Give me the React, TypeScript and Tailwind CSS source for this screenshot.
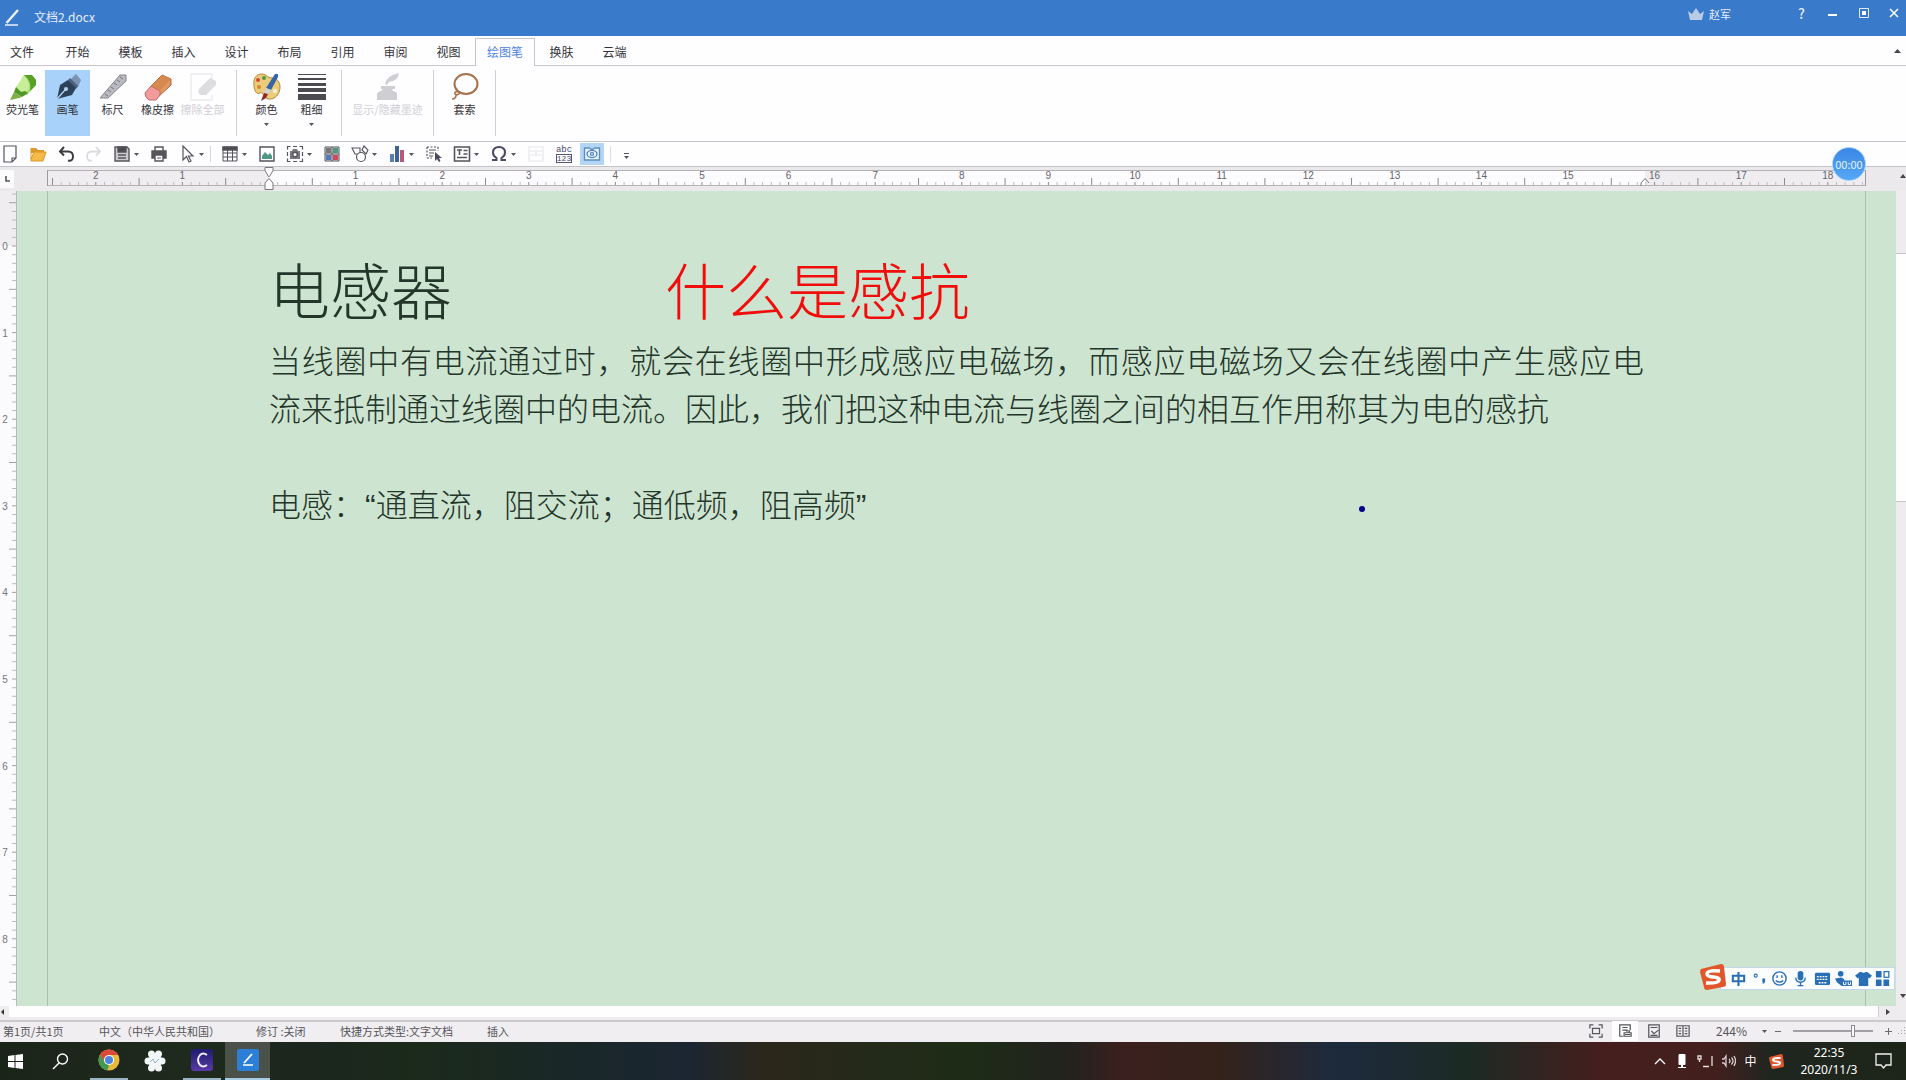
import React, { useState } from "react";

const UNIT = 86.6;
const INK = "#55555b";

/* ---------- ribbon icons ---------- */

const Highlighter = () => (
  <svg width="28" height="28" viewBox="0 0 28 28">
    <path d="M7 15 15 2h8l4 5v5l-9 10-7-2z" fill="#a9e070" />
    <path d="M15 2h8l4 5v5l-6 6q2-10-6-16z" fill="#57a02a" />
    <path d="M15 3q6 5 5 13l-5 5-6-4-2-3z" fill="#c6ee97" />
    <path d="M7 14l-2 5 8 5 6-4-3-2-4 1-4-4z" fill="#4f9628" />
    <path d="M5 19l8 5-3 1-9 2z" fill="#7fae45" />
  </svg>
);
const PenNib = () => (
  <svg width="28" height="28" viewBox="0 0 28 28">
    <path d="M15 8 22 1l5 6-3 7-5 2z" fill="#7c92b0" />
    <path d="M14 7l2-2 8 8-2 3z" fill="#4d6180" />
    <path d="M3 26 6 12l8-5 8 8-4 7z" fill="#2d4159" />
    <path d="M3 26l8-9" stroke="#b7d4f2" strokeWidth="1.3" />
    <circle cx="12" cy="16" r="2" fill="#b7d4f2" />
  </svg>
);
const RulerIcon = () => (
  <svg width="28" height="28" viewBox="0 0 28 28">
    <path d="M1 25 21 2h6v6L9 25z" fill="#b9bac2" stroke="#85868d" strokeWidth="1" />
    <path d="M6 21l3 2M9 17l3 2M12 14l3 2M15 10l3 2M18 7l3 2M21 4l3 2" stroke="#74757d" strokeWidth="1" />
  </svg>
);
const EraserIcon = () => (
  <svg width="28" height="28" viewBox="0 0 28 28">
    <path d="M7 13 18 2l9 4v6L13 25z" fill="#e39a62" stroke="#a9643b" strokeWidth="1" />
    <path d="M18 2l9 4-11 12-9-5z" fill="#d68a50" />
    <path d="M1 20l6-7 9 5v4l-4 5H5q-4-2-4-7z" fill="#f39a9a" stroke="#c46a6a" strokeWidth="1" />
  </svg>
);
const EraseAllIcon = () => (
  <svg width="28" height="28" viewBox="0 0 28 28" fill="none">
    <path d="M23 6V1H2v26h21v-5" stroke="#ebebee" strokeWidth="1.4" />
    <path d="M10 16 21 5l6 3v4L17 22h-5q-4-2-2-6z" fill="#dddde0" />
  </svg>
);
const PaletteIcon = () => (
  <svg width="28" height="28" viewBox="0 0 28 28">
    <path d="M9 1C3 1 0 6 1 12c0 6 3 10 6 8s3 4 8 6c7 1 12-5 12-12 0-5-3-9-8-9S14 1 9 1z" fill="#eccb7a" stroke="#b48a3c" strokeWidth="1" />
    <circle cx="5" cy="7" r="2" fill="#d44a3a" />
    <circle cx="11" cy="5" r="2" fill="#4f9a4a" />
    <circle cx="6" cy="14" r="2" fill="#d8862c" />
    <circle cx="22" cy="18" r="2.2" fill="#eef0d0" />
    <path d="M22 1h3v3l-7 13-5-2z" fill="#3564a8" />
    <path d="M13 15l5 2-3 4-4-1z" fill="#cfd3da" />
    <path d="M11 20l4 1-2 4-5 3z" fill="#8f2a22" />
  </svg>
);
const ThicknessIcon = () => (
  <svg width="28" height="28" viewBox="0 0 28 28" fill="#4a4a50">
    <path d="M0 1h28v1H0zM0 5h28v2H0zM0 10h28v3H0zM0 15h28v4H0zM0 21h28v6H0z" />
  </svg>
);
const InkIcon = () => (
  <svg width="28" height="28" viewBox="0 0 28 28" fill="#cfcfd3">
    <path d="M11 11q1-8 14-11-1 8-10 9l-2 3z" />
    <path d="M7 13h14v3h-3l1 2q4 1 4 3v6H3v-6q0-2 4-3l2-2H7z" />
  </svg>
);
const LassoIcon = () => (
  <svg width="28" height="28" viewBox="0 0 28 28" fill="none" stroke="#a9714a" strokeWidth="2">
    <ellipse cx="15" cy="11" rx="11.5" ry="10" />
    <path d="M8 19q-5-1-4 2 2 2 5-1M5 22q0 4-4 4" strokeWidth="1.6" />
  </svg>
);

/* ---------- quick toolbar icons ---------- */

const Q = ({ children }: { children: React.ReactNode }) => (
  <svg width="18" height="18" viewBox="0 0 18 18" fill="none" stroke={INK} strokeWidth="1.4">
    {children}
  </svg>
);
const quick: { label: string; icon: React.ReactNode; menu?: boolean; sep?: boolean; active?: boolean }[] = [
  { label: "新建", icon: <Q><path d="M3 1h12v12l-4 4H3zM15 13h-4v4" strokeWidth="1.200" /></Q> },
  {
    label: "打开",
    icon: (
      <Q>
        <path d="M2 3h5l2 2h6v3H2z" fill="#d99a2b" stroke="none" />
        <path d="M2 3v13h12l3-9H5l-3 7" fill="#f5bb4a" stroke="#d99a2b" strokeWidth="1" />
      </Q>
    ),
  },
  { label: "撤销", icon: <Q><path d="M7 2 3 6.500l4 4M3 6.500h8q5 0 5 5t-5 4" stroke="#3d3d42" strokeWidth="2" /></Q> },
  { label: "恢复", icon: <Q><path d="M11 2l4 4.500-4 4M15 6.500H7q-5 0-5 5t5 4" stroke="#dcdce0" strokeWidth="1.800" /></Q> },
  {
    label: "保存",
    menu: true,
    icon: (
      <Q>
        <path d="M2 2h12l2 2v12H2z" fill="#c9c9ce" />
        <path d="M5 2h8v5H5z" fill="#4a4a50" />
        <path d="M5 10h8M5 13h8" />
      </Q>
    ),
  },
  {
    label: "打印",
    icon: (
      <Q>
        <path d="M5 6V2h8v4" fill="#fff" />
        <path d="M2 6h14v7H2z" fill="#55555b" />
        <path d="M5 10h8v6H5z" fill="#fff" />
        <path d="M7 13h4" strokeWidth="1" />
      </Q>
    ),
  },
  { label: "选择", menu: true, sep: true, icon: <Q><path d="M5 1v14l3.500-3.500L11 17l2-1-2.500-5H15z" strokeWidth="1.200" /></Q> },
  {
    label: "表格",
    menu: true,
    icon: (
      <Q>
        <path d="M2 2h14v14H2zM2 8h14M2 12h14M6.500 5v11M11.500 5v11" strokeWidth="1" />
        <path d="M2 2h14v3H2z" fill="#4a4a50" />
      </Q>
    ),
  },
  {
    label: "图片",
    icon: (
      <Q>
        <path d="M2 2h14v14H2z" />
        <path d="M4 14v-3l3-4 3 3 2-2 2 3v3z" fill="#4d9a80" stroke="none" />
      </Q>
    ),
  },
  {
    label: "截图",
    menu: true,
    icon: (
      <Q>
        <path d="M1.500 4.500v-3h3M13.500 1.500h3v3M16.500 13.500v3h-3M4.500 16.500h-3v-3M7 1.500h4M7 16.500h4M1.500 7v4M16.500 7v4" strokeWidth="1.200" />
        <path d="M4 6h2l1-2h4l1 2h2v8H4z" fill="#77777d" stroke="none" />
        <circle cx="9" cy="9.500" r="2.300" fill="#fff" />
      </Q>
    ),
  },
  {
    label: "剪贴画",
    icon: (
      <Q>
        <path d="M2 2h14v14H2z" fill="#e4e4e8" strokeWidth="1" />
        <path d="M3 3h5v5H3z" fill="#777" stroke="none" />
        <path d="M10 3h5v5h-5z" fill="#4d9a80" stroke="none" />
        <path d="M3 10h5v5H3z" fill="#5578b8" stroke="none" />
        <path d="M10 10h5v5h-5z" fill="#cf4a5a" stroke="none" />
        <path d="M9 2v14M2 9h14" strokeWidth="1" />
      </Q>
    ),
  },
  {
    label: "形状",
    menu: true,
    icon: (
      <Q>
        <path d="M1 3h8v6H4z" strokeWidth="1.100" />
        <path d="M13 1l4 4-2 4-4-4z" strokeWidth="1.100" />
        <circle cx="10" cy="12" r="4.500" fill="#fff" strokeWidth="1.200" />
      </Q>
    ),
  },
  {
    label: "图表",
    menu: true,
    icon: (
      <Q>
        <path d="M2 9h4v8H2z" fill="#5f7fae" stroke="none" />
        <path d="M7 1h4v16H7z" fill="#3d6593" stroke="none" />
        <path d="M12 5h4v12h-4z" fill="#b55a78" stroke="none" />
      </Q>
    ),
  },
  {
    label: "选择对象",
    icon: (
      <Q>
        <path d="M2 2h11M2 2v11M13 2v4M2 13h5" strokeDasharray="2 1.500" strokeWidth="1.200" />
        <path d="M4 5h7M4 8h5M4 11h4" strokeWidth="1" />
        <path d="M10 7v9l2-2 2 3 1.500-1-1.500-3h3z" fill="#4b4b5c" stroke="none" />
      </Q>
    ),
  },
  {
    label: "文本框",
    menu: true,
    icon: (
      <Q>
        <path d="M1.500 2h15v14h-15z" strokeWidth="1.600" />
        <path d="M4 5h5M6.500 5v5M10.500 5.500h4M10.500 9h4M4 12.500h10" strokeWidth="1.600" />
      </Q>
    ),
  },
  {
    label: "符号",
    menu: true,
    icon: (
      <Q>
        <path d="M2 15h4.500v-2Q3 11 3 7.500 3 2 9 2t6 5.500q0 3.500-3.500 5.500v2H16" stroke="#4a4a62" strokeWidth="2" />
      </Q>
    ),
  },
  { label: "页眉", icon: <Q><path d="M2 2h14v14H2zM2 6h14M9 6v4M4 10h10" stroke="#e6e6ea" strokeWidth="1.200" /></Q> },
  { label: "字数统计", icon: null },
  {
    label: "阅读模式",
    active: true,
    icon: (
      <Q>
        <path d="M1.500 3h5l2.500 2 2.500-2h5v12h-15z" stroke="#5b8cc4" fill="#e9f3fd" />
        <ellipse cx="9" cy="9" rx="5" ry="3.500" stroke="#3d78bb" strokeWidth="1.200" />
        <circle cx="9" cy="9" r="1.500" stroke="#3d78bb" strokeWidth="1.200" />
      </Q>
    ),
  },
];

const Down = ({ color = "#55555b" }: { color?: string }) => (
  <svg width="5" height="3" viewBox="0 0 5 3">
    <path d="M0 0h5L2.500 3z" fill={color} />
  </svg>
);

const Divider = () => <div className="h-[66px] w-px bg-[#d2d0d4]" />;

function RibbonButton(props: {
  label: string;
  icon: React.ReactNode;
  active?: boolean;
  disabled?: boolean;
  menu?: boolean;
  wide?: boolean;
}) {
  return (
    <button
      disabled={props.disabled}
      className={
        "flex h-[66px] flex-col items-center pt-[3px] text-[11px] leading-4 whitespace-nowrap " +
        (props.wide ? "w-[91px] " : "w-[45px] ") +
        (props.active ? "bg-[#a9d2fb] " : "") +
        (props.disabled ? "text-[#d0d0d4]" : "text-[#333338]")
      }
    >
      {props.icon}
      <span>{props.label}</span>
      {props.menu && (
        <span className="mt-1.5">
          <Down />
        </span>
      )}
    </button>
  );
}

/* ---------- rulers ---------- */

function HorizontalRuler() {
  const zero = 222;
  const ticks: React.ReactNode[] = [];
  for (let i = -25; i <= 184; i++) {
    const x = zero + (i * UNIT) / 10;
    if (i % 10 === 0) continue;
    const half = Math.abs(i % 10) === 5;
    ticks.push(<path key={i} d={`M${x.toFixed(1)} ${half ? 11 : 15}V18`} stroke={half ? "#8b8a8f" : "#bcbac0"} />);
  }
  const nums: number[] = [];
  for (let n = -2; n <= 18; n++) if (n !== 0) nums.push(n);
  return (
    <svg className="block h-6 w-full" fontFamily="Liberation Sans, sans-serif" fontSize="10">
      <rect x="0" y="3" width="100%" height="16" fill="#efedf0" />
      <rect x="222" y="3" width="1376" height="16" fill="#fcfbfd" />
      <path d="M0 3.500H1819M0 18.500H1819" stroke="#b5b3b8" />
      <path d="M.5 3v16M1818.500 3v16" stroke="#9c9aa0" />
      {ticks}
      {nums.map((n) => (
        <g key={n}>
          <path d={`M${(zero + n * UNIT).toFixed(1)} 15V18`} stroke="#8b8a8f" />
          <text x={zero + n * UNIT} y="12" textAnchor="middle" fill="#66656b">
            {Math.abs(n)}
          </text>
        </g>
      ))}
      <path d="M218 .5h8v3l-3.500 6h-1L218 3.500z" fill="#fff" stroke="#77757c" />
      <path d="M222 11.500l4 4.500v6.500h-8V16z" fill="#fff" stroke="#77757c" />
      <path d="M1598 11.500l4 4.500M1598 11.500l-4 4.500v3" fill="none" stroke="#77757c" />
    </svg>
  );
}

function VerticalRuler() {
  const zero = 55;
  const ticks: React.ReactNode[] = [];
  for (let i = -6; i <= 89; i++) {
    if (i % 10 === 0) continue;
    const y = zero + (i * UNIT) / 10;
    const half = Math.abs(i % 10) === 5;
    ticks.push(<path key={i} d={`M${half ? 9 : 12} ${y.toFixed(1)}H16`} stroke={half ? "#a3a1a8" : "#bcbac0"} />);
  }
  return (
    <svg className="block h-full w-[17px] shrink-0 bg-[#fbfafc]" fontFamily="Liberation Sans, sans-serif" fontSize="10">
      <rect width="17" height="55" fill="#efedf0" />
      {ticks}
      {[0, 1, 2, 3, 4, 5, 6, 7, 8].map((n) => (
        <g key={n}>
          <path d={`M12 ${(zero + n * UNIT).toFixed(1)}H16`} stroke="#a3a1a8" />
          <text x="5" y={zero + n * UNIT + 4} textAnchor="middle" fill="#77757c">
            {n}
          </text>
        </g>
      ))}
      <path d="M16.500 0V900" stroke="#b9b9bd" />
    </svg>
  );
}

/* ---------- input method bar ---------- */

const SogouLogo = ({ size }: { size: number }) => (
  <svg width={size} height={size} viewBox="0 0 26 26">
    <path d="M1 5 21 0q3 0 3 3l2 17q0 3-3 3L7 26q-3 0-3-3L0 8q0-2 1-3z" fill="#e2562b" />
    <path d="M20 7Q8 6 7 9.500q0 3 6 3.500 7 .5 6 3.500-1 3-13 2.500" fill="none" stroke="#fff" strokeWidth="3.500" />
  </svg>
);

const ime: { label: string; icon: React.ReactNode; w: string }[] = [
  { label: "中英文", w: "w-[22px]", icon: <path d="M3 6h12v6H3zM9 2v15" fill="none" strokeWidth="2.200" /> },
  {
    label: "标点",
    w: "w-5",
    icon: (
      <>
        <circle cx="5" cy="6" r="1.600" fill="none" strokeWidth="1.200" />
        <path d="M12 9h3v3q0 2-3 3l1-2h-1z" stroke="none" />
      </>
    ),
  },
  {
    label: "表情",
    w: "w-[21px]",
    icon: (
      <>
        <circle cx="9" cy="9" r="7" fill="none" strokeWidth="1.500" />
        <path d="M6.500 5.500v3M11.500 5.500v3M5 11q4 3.500 8 0" fill="none" strokeWidth="1.400" />
      </>
    ),
  },
  {
    label: "语音",
    w: "w-[21px]",
    icon: (
      <>
        <rect x="6" y="1" width="6" height="10" rx="3" stroke="none" />
        <path d="M4 8q0 5 5 5t5-5M9 13v3M6 16.500h6" fill="none" strokeWidth="1.400" />
      </>
    ),
  },
  {
    label: "软键盘",
    w: "w-[22px]",
    icon: (
      <>
        <rect x="1" y="3" width="16" height="13" rx="1.500" stroke="none" />
        <path d="M3 7h12M3 10h12M5 13.500h8" stroke="#fff" strokeWidth="1.400" strokeDasharray="2 1" />
      </>
    ),
  },
  {
    label: "用户",
    w: "w-[21px]",
    icon: (
      <>
        <circle cx="6" cy="4" r="3" stroke="none" />
        <path d="M0 9l7-1 3 2v1h8v6H7l-5-4z" stroke="none" />
        <path d="M9 12.500v3h2.500v-3M14 12.500v3h2.500v-3" fill="none" stroke="#fff" strokeWidth="1" />
      </>
    ),
  },
  { label: "皮肤", w: "w-[19px]", icon: <path d="M5 2h2q2 2 4 0h2l5 4-3 3-1-1v9H4V8L3 9 0 6z" stroke="none" /> },
  {
    label: "工具箱",
    w: "w-[19px]",
    icon: (
      <>
        <path d="M2 1h6v7H2zM2 10h6v7H2zM10 10h6v7h-6z" stroke="none" />
        <rect x="10.700" y="1.700" width="5" height="6" fill="none" strokeWidth="1.300" />
      </>
    ),
  },
];

const tabs = ["开始", "模板", "插入", "设计", "布局", "引用", "审阅", "视图", "绘图笔", "换肤", "云端"];

export default function App() {
  const [tab, setTab] = useState("绘图笔");
  const [zoom, setZoom] = useState(76);
  return (
    <div
      className="flex h-screen w-full flex-col overflow-hidden bg-[#fefdff] text-xs text-[#333338] select-none"
      style={{ fontFamily: '"Noto Sans CJK SC", sans-serif' }}
    >
      {/* title bar */}
      <header className="flex h-9 shrink-0 items-start bg-[#3a7acb] text-[#e4edf9]">
        <div className="flex h-[34px] items-center gap-[14px] pl-1">
          <svg width="16" height="18" viewBox="0 0 16 18" fill="none" stroke="#eaf2fc">
            <path d="M2.500 15 14 2" strokeWidth="2.400" />
            <path d="M1 17h13" strokeWidth="1.500" />
          </svg>
          <span className="text-xs">文档2.docx</span>
        </div>
        <div className="ml-auto flex h-[28px] items-center">
          <svg width="16" height="13" viewBox="0 0 16 13" fill="#b9cbe6">
            <path d="M0 3l4 3 4-6 4 6 4-3-2 9H2z" />
          </svg>
          <span className="ml-[5px] text-[11px]">赵军</span>
        </div>
        <div className="ml-[55px] flex h-[26px] items-center">
          <button aria-label="帮助" className="w-[31px] text-center text-sm font-medium">?</button>
          <button aria-label="最小化" className="flex w-[31px] justify-center">
            <svg width="12" height="10" viewBox="0 0 12 10"><path d="M1 6h9v2H1z" fill="#fff" /></svg>
          </button>
          <button aria-label="还原" className="flex w-[31px] justify-center">
            <svg width="10" height="10" viewBox="0 0 10 10"><path d="M.5.500h9v9h-9z" fill="none" stroke="#dfe9f7" /><path d="M3 3h4v4H3z" fill="#fff" /></svg>
          </button>
          <button aria-label="关闭" className="-mr-0.5 flex w-[29px] justify-center">
            <svg width="10" height="10" viewBox="0 0 10 10"><path d="M1 1l8 8M9 1L1 9" stroke="#fff" strokeWidth="1.500" /></svg>
          </button>
        </div>
      </header>

      {/* tabs */}
      <nav className="flex h-[30px] shrink-0 items-end border-b border-[#c8c5cb] bg-[#fefdff]">
        <button className="mr-[7px] h-[27px] w-11">文件</button>
        {tabs.map((t) =>
          t === tab ? (
            <button key={t} onClick={() => setTab(t)} className="-mb-px h-[28px] w-[60px] border border-b-0 border-[#c8c5cb] bg-[#fefdff] pb-px text-[#4d86dd]">
              {t}
            </button>
          ) : (
            <button key={t} onClick={() => setTab(t)} className="h-[27px] w-[53px]">
              {t}
            </button>
          ),
        )}
        <button aria-label="折叠功能区" className="mr-[5px] mb-3 ml-auto">
          <svg width="7" height="4" viewBox="0 0 7 4"><path d="M0 4h7L3.500 0z" fill="#444" /></svg>
        </button>
      </nav>

      {/* ribbon */}
      <section className="flex h-[76px] shrink-0 border-b border-[#c8c5cb] pt-1">
        <RibbonButton label="荧光笔" icon={<Highlighter />} />
        <RibbonButton label="画笔" icon={<PenNib />} active />
        <RibbonButton label="标尺" icon={<RulerIcon />} />
        <RibbonButton label="橡皮擦" icon={<EraserIcon />} />
        <RibbonButton label="擦除全部" icon={<EraseAllIcon />} disabled />
        <div className="ml-[11px]"><Divider /></div>
        <div className="mx-[7px] flex">
          <RibbonButton label="颜色" icon={<PaletteIcon />} menu />
          <RibbonButton label="粗细" icon={<ThicknessIcon />} menu />
        </div>
        <Divider />
        <RibbonButton label="显示/隐藏墨迹" icon={<InkIcon />} disabled wide />
        <Divider />
        <div className="mx-2"><RibbonButton label="套索" icon={<LassoIcon />} /></div>
        <Divider />
      </section>

      {/* quick access toolbar */}
      <section className="flex h-[25px] shrink-0 items-center border-b border-[#c5c2c8]">
        <div className="-ml-1 flex items-center">
          {quick.map((q) => (
            <React.Fragment key={q.label}>
              <button
                aria-label={q.label}
                className={"flex h-[22px] items-center justify-center " + (q.active ? "mx-0.5 w-6 bg-[#b3d6f7]" : "w-7")}
              >
                {q.icon ?? (
                  <span className="flex flex-col items-center text-[9px] leading-2 text-[#4a4a6a]" style={{ fontFamily: '"Liberation Mono", monospace' }}>
                    <span>abc</span>
                    <span className="border border-[#55557a] text-[8px] leading-[7px]">123</span>
                  </span>
                )}
              </button>
              {q.menu && (
                <span className="mr-1 -ml-1 flex w-[9px] justify-center">
                  <Down />
                </span>
              )}
              {q.sep && <span className="mr-[5px] h-4 w-px bg-[#d8d6da]" />}
            </React.Fragment>
          ))}
          <span className="ml-1 h-4 w-px bg-[#dedce0]" />
          <button aria-label="自定义工具栏" className="ml-[13px] flex flex-col items-center gap-0.5 pt-1">
            <span className="h-px w-[5px] bg-[#55555b]" />
            <Down />
          </button>
        </div>
      </section>

      {/* horizontal ruler */}
      <section className="relative flex h-6 shrink-0 bg-[#ebe9ec]">
        <div className="flex w-[47px] shrink-0 items-center">
          <span className="flex h-[18px] w-[14px] items-center justify-center bg-[#fbfafc]">
            <svg width="5" height="6" viewBox="0 0 5 6"><path d="M1 0v5h4" fill="none" stroke="#55555b" strokeWidth="1.600" /></svg>
          </span>
        </div>
        <div className="min-w-0 flex-1">
          <HorizontalRuler />
        </div>
        <div className="flex w-10 shrink-0 items-start justify-end pt-[7px]">
          <svg width="6" height="4" viewBox="0 0 6 4"><path d="M0 4h6L3 0z" fill="#444" /></svg>
        </div>
        <div className="absolute -top-5 right-10 flex size-[34px] items-center justify-center rounded-full border border-[#a8d4fb] bg-linear-to-b from-[#3b86e6] to-[#55a8f5] text-[11px] text-[#e8f3ff]">
          00:00
        </div>
      </section>

      {/* document */}
      <main className="flex min-h-0 flex-1 overflow-hidden">
        <VerticalRuler />
        <div className="relative flex min-w-0 flex-1 bg-[#cde4d0] px-[30px]">
          <article
            className="relative flex-1 border-x border-[#a9bfae] pt-[54px] pr-[221px] pl-[221px] text-[32px] leading-[48px] font-light text-[#24352a]"
            style={{ fontFamily: '"Liberation Sans", "Noto Sans CJK SC", sans-serif' }}
          >
            <h1 className="flex h-[93px] items-center gap-[213px] pt-1.5 text-[61px] leading-none">
              <span>电感器</span>
              <span className="text-[#f20d0d]">什么是感抗</span>
            </h1>
            <p className="text-justify">
              当线圈中有电流通过时，就会在线圈中形成感应电磁场，而感应电磁场又会在线圈中产生感应电流来抵制通过线圈中的电流。因此，我们把这种电流与线圈之间的相互作用称其为电的感抗
            </p>
            <p className="mt-12">电感：“通直流，阻交流；通低频，阻高频”</p>
            <span className="absolute top-[315px] left-[1311px] size-1.5 rounded-full bg-[#00008c]" />
          </article>

          <div className="absolute right-px bottom-4 flex h-[23px] items-center border border-[#c3d6ea] bg-[#fbfdff] pr-0.5 pl-1.5">
            <span className="absolute -top-1 -left-[21px]">
              <SogouLogo size={26} />
            </span>
            {ime.map((b) => (
              <button key={b.label} aria-label={b.label} className={"flex justify-center " + b.w}>
                <svg width="17" height="17" viewBox="0 0 18 18" fill="#2a6fb5" stroke="#2a6fb5">
                  {b.icon}
                </svg>
              </button>
            ))}
          </div>
        </div>
        <div className="flex w-[10px] shrink-0 flex-col bg-[#eeecef]">
          <div className="mt-[62px] h-[249px] border-y border-[#c9c7cc] bg-[#fefdff]" />
          <div className="mt-auto mb-2 flex justify-end">
            <svg width="6" height="4" viewBox="0 0 6 4"><path d="M0 0h6L3 4z" fill="#444" /></svg>
          </div>
        </div>
      </main>

      {/* horizontal scrollbar */}
      <div className="flex h-[14px] shrink-0 items-start bg-[#eeecef]">
        <svg className="mt-[3px]" width="9" height="6" viewBox="0 0 9 6"><path d="M4 0v6L1 3z" fill="#333" /></svg>
        <div className="h-[11px] flex-1 border-r border-[#cfcdd2] bg-[#fefeff]" />
        <div className="mt-[3px] flex w-[27px] justify-center pr-2">
          <svg width="5" height="6" viewBox="0 0 5 6"><path d="M0 0v6l4-3z" fill="#444" /></svg>
        </div>
      </div>

      {/* status bar */}
      <footer className="flex h-[22px] shrink-0 items-center border-t-2 border-[#cbc9cd] bg-[#f0eef1] pb-0.5 pl-[3px] text-[11px] leading-4 whitespace-nowrap text-[#55555b]">
        <span className="w-[96px]">第1页/共1页</span>
        <span className="w-[157px]">中文（中华人民共和国）</span>
        <span className="w-[84px]">修订 :关闭</span>
        <span className="w-[147px]">快捷方式类型:文字文档</span>
        <span>插入</span>
        <div className="ml-auto flex items-center">
          {[
            <path key="a" d="M1 5V1h4M11 1h4v4M15 11v4h-4M5 15H1v-4M4 5h8v6H4z" />,
            <path key="b" d="M14 7V1H2v13h4M5 4h6M5 7h6M7 10h8v4H7zM9 8h4v2M8 12h6" />,
            <path key="c" d="M2 1h12v14H2zM4 4h8M5 8l3 3 5-4M4 13h8" />,
            <path key="d" d="M1 2h14v12H1zM8 2v12M3 5h3M3 8h3M3 11h3M10 5h3M10 8h3M10 11h3" />,
          ].map((p, i) => (
            <button
              key={i}
              aria-label={["全屏", "页面视图", "网页视图", "阅读视图"][i]}
              className={"mr-[3px] flex h-5 w-[26px] items-center justify-center " + (i === 1 ? "bg-white" : "")}
            >
              <svg width="14" height="14" viewBox="0 0 16 16" fill="none" stroke="#55555b" strokeWidth="1.400">{p}</svg>
            </button>
          ))}
          <button className="ml-[17px] w-[38px] text-left text-xs">244%</button>
          <span className="ml-[8px]"><Down /></span>
          <button aria-label="缩小" className="ml-[8px] h-px w-1.5 bg-[#6b6a70]" />
          <input
            type="range"
            aria-label="缩放"
            value={zoom}
            onChange={(e) => setZoom(Number(e.target.value))}
            className="mx-3 h-0.5 w-20 appearance-none bg-[#a19fa5] [&::-webkit-slider-thumb]:h-3 [&::-webkit-slider-thumb]:w-1 [&::-webkit-slider-thumb]:appearance-none [&::-webkit-slider-thumb]:border [&::-webkit-slider-thumb]:border-[#8b8a8f] [&::-webkit-slider-thumb]:bg-white"
          />
          <button aria-label="放大" className="flex">
            <svg width="7" height="7" viewBox="0 0 7 7"><path d="M0 3.500h7M3.500 0v7" stroke="#6b6a70" /></svg>
          </button>
          <svg className="ml-1.5" width="8" height="8" viewBox="0 0 8 8"><path d="M6 0h1v1H6zM6 3h1v1H6zM3 3h1v1H3zM6 6h1v1H6zM3 6h1v1H3zM0 6h1v1H0z" fill="#a5a3a8" /></svg>
        </div>
      </footer>

      {/* taskbar */}
      <div
        className="flex h-[38px] shrink-0 items-center text-white"
        style={{
          background:
            "linear-gradient(90deg,#1b2419 0%,#1f2a1e 10%,#1c261d 16%,#1b2a1b 22%,#1a272a 31%,#1b2632 36%,#2b271b 40%,#1d2c17 51%,#23221e 56%,#3b201e 59%,#33221a 64%,#1d2a3e 70%,#1c2a24 77%,#451f1e 84%,#421f1d 90%,#1f2620 93%,#1c2518 100%)",
        }}
      >
        <button aria-label="开始菜单" className="flex w-[30px] justify-center">
          <svg width="15" height="15" viewBox="0 0 15 15" fill="#fff"><path d="M0 2l6.500-1v6H0zM7.500 1L15 0v7H7.500zM0 8h6.500v6L0 13zM7.500 8H15v7l-7.500-1z" /></svg>
        </button>
        <button aria-label="搜索" className="ml-2 flex w-11 justify-center">
          <svg width="17" height="17" viewBox="0 0 17 17" fill="none" stroke="#fff" strokeWidth="1.400"><circle cx="10.500" cy="6" r="5" /><path d="M7 10L1 16" /></svg>
        </button>
        <button aria-label="Chrome" className="ml-2 flex h-[38px] w-[38px] items-center justify-center border-b-2 border-[#9ab6c6]">
          <svg width="22" height="22" viewBox="0 0 22 22">
            <circle cx="11" cy="11" r="10.500" fill="#e8b93a" />
            <path d="M1.900 5.700A10.500 10.500 0 0 1 20.200 6H11L6.600 13.500z" fill="#d94a3d" />
            <path d="M1.900 5.700l4.700 7.800L11 16l-1.500 5.400A10.500 10.500 0 0 1 1.900 5.700z" fill="#3f9a52" />
            <circle cx="11" cy="11" r="5" fill="#fff" />
            <circle cx="11" cy="11" r="4" fill="#4a86e0" />
          </svg>
        </button>
        <button aria-label="花瓣" className="ml-[15px] flex w-6 justify-center">
          <svg width="22" height="22" viewBox="0 0 22 22" fill="#f3f6f6">
            <circle cx="7.500" cy="4" r="3.500" /><circle cx="14.500" cy="4" r="3.500" /><circle cx="18" cy="11" r="3.500" />
            <circle cx="14.500" cy="18" r="3.500" /><circle cx="7.500" cy="18" r="3.500" /><circle cx="4" cy="11" r="3.500" />
            <circle cx="11" cy="11" r="7" />
            <path d="M6 12l3-3 2 4 4-4" stroke="#8fb3cc" fill="none" />
          </svg>
        </button>
        <button aria-label="Camtasia" className="ml-[16px] flex h-[38px] w-[38px] items-center justify-center border-b-2 border-[#9ab6c6]">
          <span className="flex size-[22px] items-center justify-center rounded-[3px] bg-linear-to-b from-[#1d1c6e] to-[#5a3aa5]">
            <svg width="14" height="16" viewBox="0 0 14 16" fill="none" stroke="#f0eefc" strokeWidth="2"><path d="M12 3Q8 0 5 3 1 8 5 13q3 3 7 0" /></svg>
          </span>
        </button>
        <button aria-label="文字处理" className="ml-1 flex h-[38px] w-[45px] items-center justify-center border-b-2 border-[#a9cbe2] bg-[#4a5149]">
          <span className="flex size-[22px] items-center justify-center rounded-[2px] bg-[#2c7fd6]">
            <svg width="12" height="14" viewBox="0 0 12 14" fill="none" stroke="#fff"><path d="M2 10L10 1" strokeWidth="1.800" /><path d="M1 12h10" strokeWidth="1.500" /></svg>
          </span>
        </button>
        <div className="ml-auto flex items-center pr-[14px]">
          <svg width="12" height="7" viewBox="0 0 12 7" fill="none" stroke="#fff" strokeWidth="1.300"><path d="M1 6l5-5 5 5" /></svg>
          <svg className="ml-[11px]" width="10" height="15" viewBox="0 0 10 15" fill="#fff"><rect x="1.500" width="7" height="11" rx="1" /><path d="M4 11h2v2h3v1H1v-1h3z" /></svg>
          <svg className="ml-[10px]" width="16" height="14" viewBox="0 0 16 14" fill="none" stroke="#e4dede" strokeWidth="1.300"><path d="M1 2h3v3H1zM2.500 5v3M6 12.500h6M15 2v10" /></svg>
          <svg className="ml-[8px]" width="15" height="14" viewBox="0 0 15 14" fill="none" stroke="#d8d0d0" strokeWidth="1.300"><path d="M1 5h2l2-3v10L3 9H1M8 5q2 2 0 4M10.500 3.500q3 3.500 0 7M13 2q3 5 0 10" /></svg>
          <span className="ml-[8px] w-[13px] text-center text-xs">中</span>
          <span className="ml-[12px]"><SogouLogo size={15} /></span>
          <time
            className="ml-[13px] w-[64px] text-center text-xs leading-[17px]"
            style={{ fontFamily: '"Noto Sans", sans-serif' }}
          >
            22:35
            <br />
            2020/11/3
          </time>
          <svg className="ml-[14px]" width="17" height="16" viewBox="0 0 17 16" fill="none" stroke="#f2f2f2" strokeWidth="1.300"><path d="M1 1h15v11h-5l-2.500 3L6 12H1z" /></svg>
        </div>
      </div>
    </div>
  );
}
